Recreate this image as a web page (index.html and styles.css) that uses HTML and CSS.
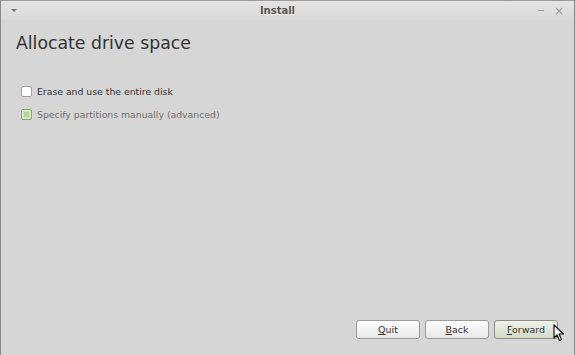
FILE: index.html
```html
<!DOCTYPE html>
<html lang="en">
<head>
    <meta charset="UTF-8">
    <title>Install</title>
    <link rel="stylesheet" href="styles.css">
</head>
<body>
    <div class="window">
        <header class="titlebar">
            <span class="menu-arrow"></span>
            <h1>Install</h1>
            <div class="controls">
                <span class="minimize"></span>
                <span class="close">&times;</span>
            </div>
        </header>
        <main class="content">
            <h2>Allocate drive space</h2>
            <div class="options">
                <label class="option">
                    <span class="check"></span>
                    Erase and use the entire disk
                </label>
                <label class="option disabled">
                    <span class="check active"></span>
                    Specify partitions manually (advanced)
                </label>
            </div>
            <div class="buttons">
                <button><u>Q</u>uit</button>
                <button><u>B</u>ack</button>
                <button class="default"><u>F</u>orward</button>
                <svg class="cursor" width="12" height="18" viewBox="0 0 12 18">
                    <path d="M1 1 L1 14 L4 11 L6.5 16.5 L8.5 15.5 L6 10 L10.5 10 Z" fill="#fff" stroke="#111" stroke-width="1.2" stroke-linejoin="round"/>
                </svg>
            </div>
        </main>
    </div>
</body>
</html>
```
FILE: styles.css
```css
html, body {
    margin: 0;
    padding: 0;
    height: 100%;
}
body {
    font-family: "DejaVu Sans", sans-serif;
    background-color: #d6d6d6;
    overflow: hidden;
}
.window {
    height: 355px;
    display: flex;
    flex-direction: column;
    border-left: 1px solid #8a8a8a;
    border-right: 1px solid #8a8a8a;
    box-sizing: border-box;
}
.titlebar {
    height: 20px;
    display: flex;
    align-items: center;
    background: linear-gradient(#e4e4e4, #d9d9d9);
    border-top: 1px solid #9a9a9a;
    box-sizing: border-box;
}
.titlebar h1 {
    flex: 1;
    margin: 0;
    text-align: center;
    font-size: 10px;
    font-weight: bold;
    color: #555;
    text-shadow: 0 1px 0 #f4f4f4;
}
.menu-arrow {
    width: 0;
    height: 0;
    margin-left: 10px;
    border-left: 3px solid transparent;
    border-right: 3px solid transparent;
    border-top: 3px solid #777;
}
.controls {
    display: flex;
    align-items: center;
    gap: 10px;
    margin-right: 10px;
}
.minimize {
    width: 6px;
    height: 1px;
    background: #999;
}
.close {
    font-size: 12px;
    color: #999;
    line-height: 10px;
}
.content {
    flex: 1;
    display: flex;
    flex-direction: column;
    padding: 13px 16px 16px 15px;
}
h2 {
    margin: 0;
    font-size: 17.3px;
    font-weight: normal;
    color: #333;
}
.options {
    margin-top: 33px;
    margin-left: 5px;
    display: flex;
    flex-direction: column;
    gap: 12px;
}
.option {
    display: flex;
    align-items: center;
    gap: 5px;
    font-size: 9.3px;
    color: #333;
}
.option.disabled {
    color: #6f6f6f;
}
.check {
    width: 9px;
    height: 9px;
    border: 1px solid #a0a0a0;
    border-radius: 2px;
    background: #fff;
}
.check.active {
    border-color: #8aae62;
    background: #b7d59a;
    box-shadow: inset 0 0 0 2px #d3e6c0;
}
.buttons {
    margin-top: auto;
    display: flex;
    justify-content: flex-end;
    gap: 5px;
    position: relative;
}
button {
    width: 64px;
    height: 19px;
    padding: 0;
    font-family: "DejaVu Sans", sans-serif;
    font-size: 9.5px;
    color: #333;
    border: 1px solid #9c9c9c;
    border-radius: 3px;
    background: linear-gradient(#fdfdfd, #e9e9e9);
}
button.default {
    background: linear-gradient(#f0f2ea, #d4d9c8);
    border-color: #8e8e8e;
}
.cursor {
    position: absolute;
    right: -7px;
    top: 4px;
}
```
